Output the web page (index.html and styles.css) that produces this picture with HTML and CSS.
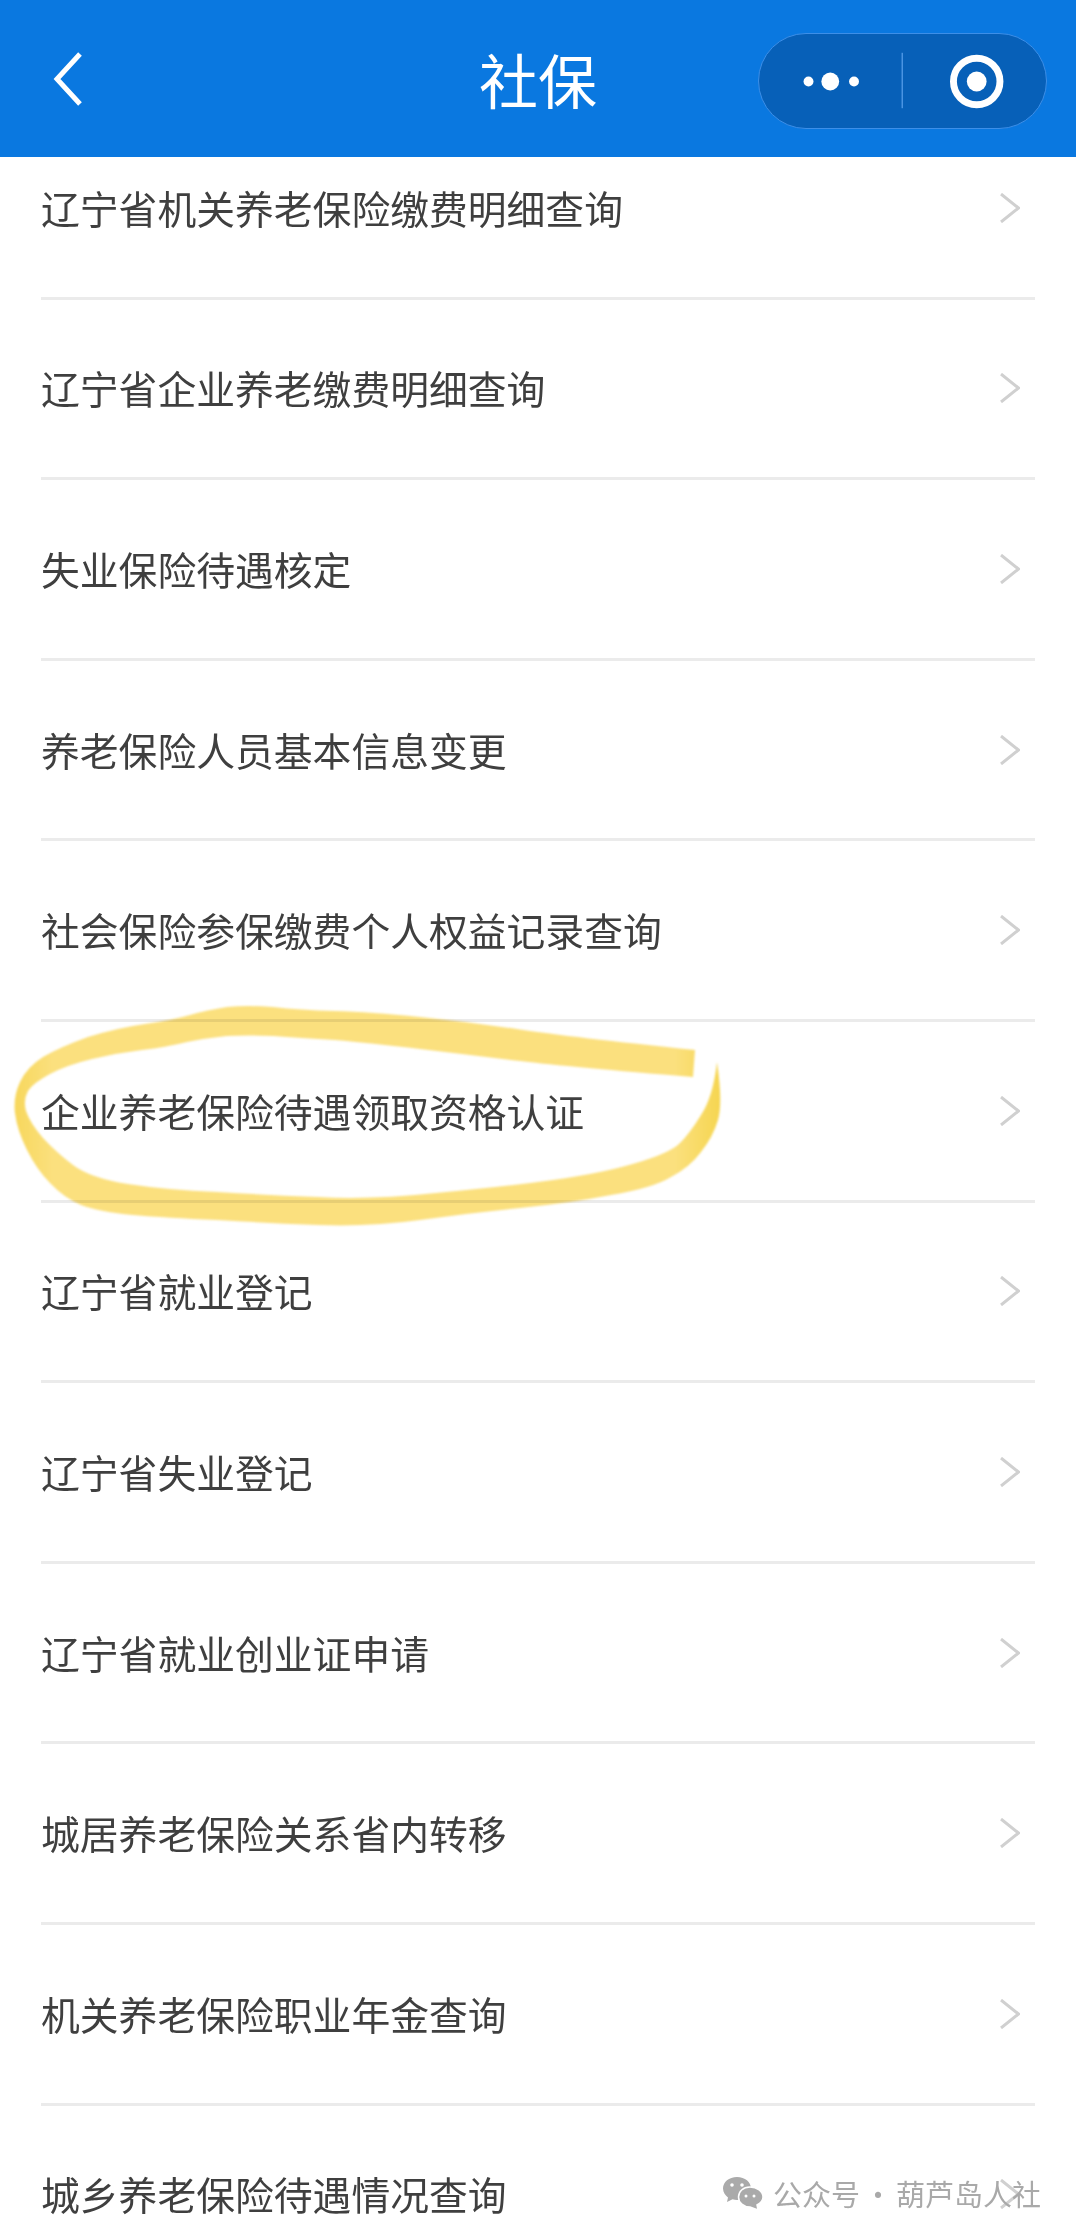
FILE: index.html
```html
<!DOCTYPE html>
<html lang="zh-CN">
<head>
  <meta charset="UTF-8" />
  <title>社保</title>
  <link rel="stylesheet" href="styles.css">
</head>
<body>
  <svg class="defs" width="0" height="0">
    <symbol id="chev" viewBox="0 0 20 30"><path d="M1 1 L18.500 15 L1 29" /></symbol>
  </svg>

  <header class="topbar">
    <div class="bar-left">
      <svg class="back" viewBox="0 0 30 54"><path d="M27 2 L4 27 L27 52" /></svg>
    </div>
    <h1 class="title">社保</h1>
    <div class="bar-right">
      <div class="capsule">
        <svg class="capsule-icons" viewBox="0 0 288 95">
          <circle cx="49" cy="48" r="5" />
          <circle cx="71" cy="48" r="9" />
          <circle cx="95" cy="48" r="5" />
          <rect class="capsule-line" x="143" y="19" width="1.5" height="56" />
          <circle class="ring" cx="219" cy="48" r="23.5" />
          <circle cx="219" cy="48" r="10" />
        </svg>
      </div>
    </div>
  </header>

  <ul class="list">
    <li class="row"><span>辽宁省机关养老保险缴费明细查询</span><svg class="arrow"><use href="#chev" /></svg></li>
    <li class="row"><span>辽宁省企业养老缴费明细查询</span><svg class="arrow"><use href="#chev" /></svg></li>
    <li class="row"><span>失业保险待遇核定</span><svg class="arrow"><use href="#chev" /></svg></li>
    <li class="row"><span>养老保险人员基本信息变更</span><svg class="arrow"><use href="#chev" /></svg></li>
    <li class="row"><span>社会保险参保缴费个人权益记录查询</span><svg class="arrow"><use href="#chev" /></svg></li>
    <li class="row"><span>企业养老保险待遇领取资格认证</span><svg class="arrow"><use href="#chev" /></svg></li>
    <li class="row"><span>辽宁省就业登记</span><svg class="arrow"><use href="#chev" /></svg></li>
    <li class="row"><span>辽宁省失业登记</span><svg class="arrow"><use href="#chev" /></svg></li>
    <li class="row"><span>辽宁省就业创业证申请</span><svg class="arrow"><use href="#chev" /></svg></li>
    <li class="row"><span>城居养老保险关系省内转移</span><svg class="arrow"><use href="#chev" /></svg></li>
    <li class="row"><span>机关养老保险职业年金查询</span><svg class="arrow"><use href="#chev" /></svg></li>
    <li class="row"><span>城乡养老保险待遇情况查询</span><svg class="arrow"><use href="#chev" /></svg></li>
  </ul>

  <!-- hand drawn marker round the 6th row -->
  <svg class="marker" viewBox="0 0 1076 2236">
    <defs>
      <linearGradient id="ink" gradientUnits="userSpaceOnUse" x1="10" y1="0" x2="725" y2="0">
        <stop offset="0" stop-color="#f7d658" />
        <stop offset="0.06" stop-color="#fbe07e" />
        <stop offset="0.93" stop-color="#fbe07e" />
        <stop offset="1" stop-color="#f5d44c" />
      </linearGradient>
    </defs>
    <path fill="url(#ink)" d="M695 1050 Q570 1037 520 1029.5 Q470 1022 420 1017 Q370 1012 335 1011 Q300 1010 273 1007 Q247 1005 227 1007 Q207 1010 190 1015 Q173 1020 145 1024 Q117 1028 88 1037 Q60 1047 43 1057 Q27 1067 20 1082 Q13 1097 15 1113 Q17 1130 27 1150 Q37 1170 50 1183 Q63 1197 81 1205 Q100 1212 133 1215 Q167 1218 217 1220 Q267 1223 318 1225 Q370 1227 420 1220 Q470 1213 520 1208 Q570 1203 611 1195 Q653 1188 671 1177 Q690 1167 701 1152 Q713 1137 718 1120 Q723 1103 717 1062 Q713 1097 701 1115 Q690 1133 680 1143 Q670 1153 636 1163 Q603 1173 553 1180 Q503 1187 436 1193 Q370 1200 318 1197 Q267 1195 217 1192 Q167 1190 128 1184 Q90 1178 73 1165 Q57 1153 43 1138 Q30 1123 26 1111 Q23 1100 28 1091 Q33 1083 50 1074 Q67 1065 92 1059 Q117 1053 142 1050 Q167 1047 187 1042 Q207 1038 227 1036 Q247 1035 273 1036 Q300 1038 335 1040 Q370 1043 420 1049 Q470 1055 520 1061 Q570 1067 693 1077 Z" />
  </svg>

  <div class="watermark">
    <svg class="wechat" viewBox="0 0 40 33">
      <path class="wechat-back" d="M14 0 C6 0 0 5 0 11.500 C0 15.500 2.500 18.500 5 20.500 L4 25 L9.500 22.300 C11 22.800 12.500 23 14 23 C22 23 28 17.500 28 11.500 C28 5 22 0 14 0 Z" />
      <path class="wechat-front" d="M27 10 C20 10 15.500 14.500 15.500 20 C15.500 25.500 20.500 30 27 30 L35 33 L34 28 C37.500 26 40 23.500 40 20 C40 14.500 34 10 27 10 Z" />
      <circle class="wechat-eye" cx="9" cy="8" r="1.800" />
      <circle class="wechat-eye" cx="19" cy="8" r="1.800" />
      <circle class="wechat-eye" cx="23" cy="19" r="1.500" />
      <circle class="wechat-eye" cx="31" cy="19" r="1.500" />
    </svg>
    <span>公众号 · 葫芦岛人社</span>
  </div>
</body>
</html>
```

FILE: styles.css
```css
html, body {
  margin: 0;
  padding: 0;
  height: 2236px;
  overflow: hidden;
  background: #fff;
}
body {
  position: relative;
  font-family: "Noto Sans CJK SC", "Liberation Sans", sans-serif;
}
.defs {
  position: absolute;
}

.topbar {
  position: relative;
  z-index: 2;
  height: 157px;
  background: #0a78e0;
  display: grid;
  grid-template-columns: 1fr auto 1fr;
  align-items: center;
}
.bar-left {
  padding-left: 53px;
  display: flex;
}
.bar-right {
  padding-right: 29px;
  display: flex;
  justify-content: flex-end;
}
.back {
  width: 30px;
  height: 54px;
}
.back path {
  fill: none;
  stroke: #fff;
  stroke-width: 5;
}
.title {
  margin: 0;
  color: #fff;
  font-size: 59px;
  font-weight: 400;
  line-height: 1;
}
.capsule {
  width: 289px;
  height: 96px;
  margin-top: 4px;
  box-sizing: border-box;
  background: #0760b8;
  border: 1.500px solid #3d8fe8;
  border-radius: 48px;
}
.capsule-icons {
  display: block;
  width: 100%;
  height: 100%;
  fill: #fff;
}
.capsule-line {
  fill: #4a94e2;
}
.ring {
  fill: none;
  stroke: #fff;
  stroke-width: 7;
}

.list {
  list-style: none;
  margin: -38px 0 0;
  padding: 0 41px;
}
.row {
  height: 180.600px;
  box-sizing: border-box;
  border-bottom: 3px solid #ebebeb;
  display: flex;
  align-items: center;
  justify-content: space-between;
  padding-right: 15px;
  padding-bottom: 2px;
  color: #3f3f3f;
  font-size: 38.800px;
}
.arrow {
  width: 20px;
  height: 30px;
  fill: none;
  stroke: #d0d0d0;
  stroke-width: 3;
  transform: translateY(1px);
}

.marker {
  position: absolute;
  left: 0;
  top: 0;
  width: 1076px;
  height: 2236px;
  z-index: 3;
  mix-blend-mode: multiply;
  pointer-events: none;
}
.marker path {
  filter: blur(1px);
}

.watermark {
  position: absolute;
  z-index: 4;
  left: 723px;
  top: 2170px;
  display: flex;
  align-items: center;
  gap: 10px;
  color: #a9a9a9;
  font-size: 29px;
  line-height: 46px;
  word-spacing: -3px;
}
.wechat {
  width: 40px;
  height: 33px;
}
.wechat-back, .wechat-front {
  fill: #aaa;
}
.wechat-front {
  stroke: #fff;
  stroke-width: 1.500;
}
.wechat-eye {
  fill: #fff;
}
```
